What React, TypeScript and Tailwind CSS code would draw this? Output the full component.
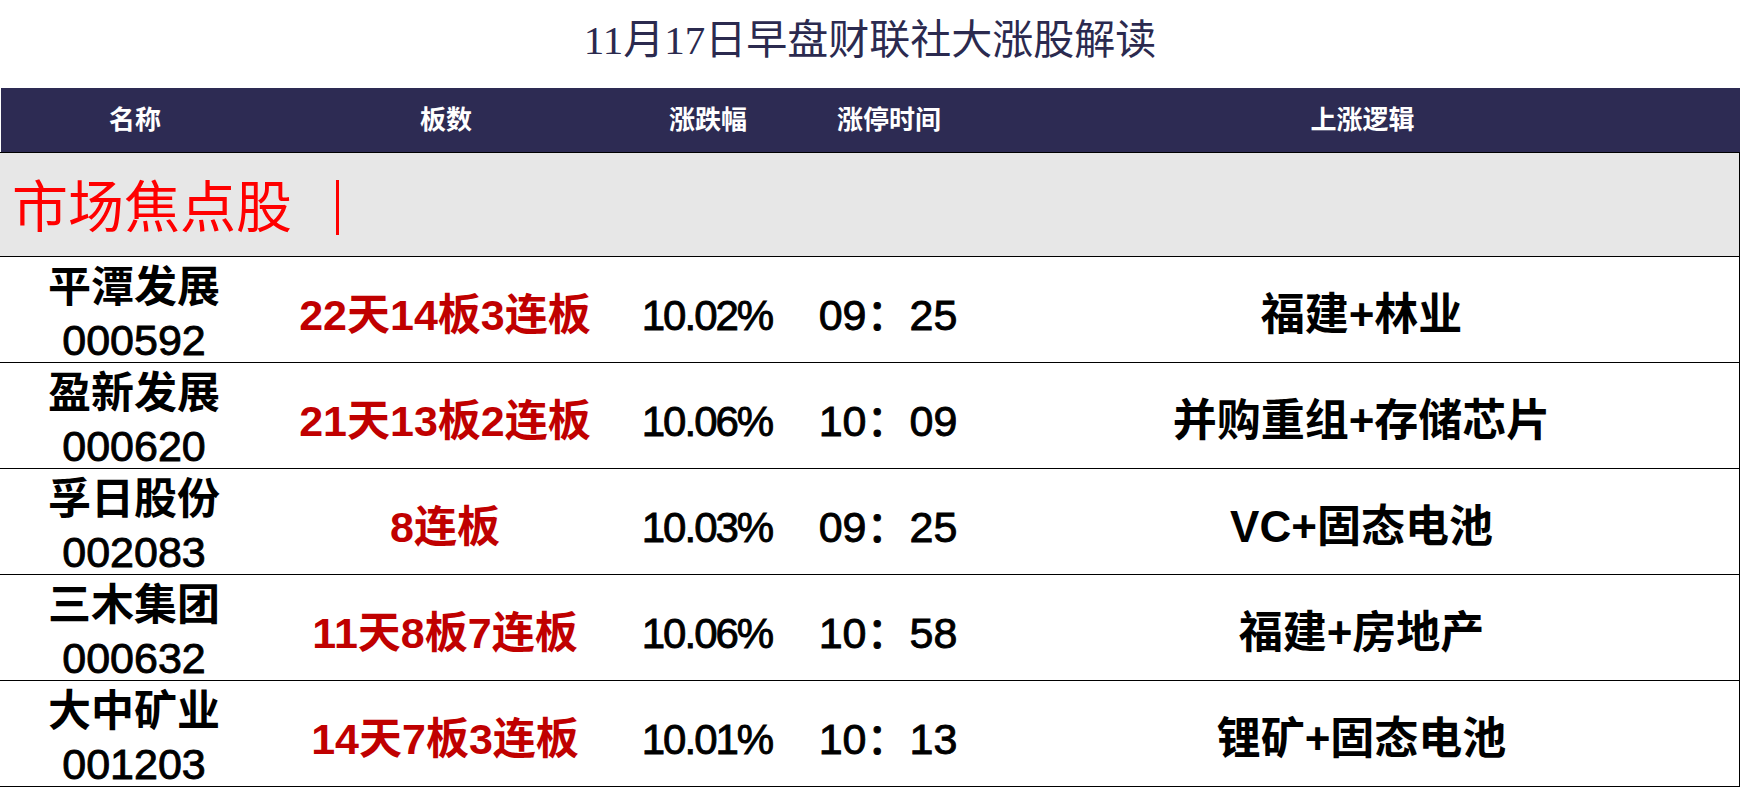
const sans = "font-['Liberation_Sans','Noto_Sans_CJK_SC',sans-serif]"

// medium weight: regular face with a thin stroke
const medium = '[-webkit-text-stroke:0.9px_black]'

const rows = [
  { name: '平潭发展', code: '000592', boards: '22天14板3连板', pct: '10.02%', time: '09：25', logic: '福建+林业' },
  { name: '盈新发展', code: '000620', boards: '21天13板2连板', pct: '10.06%', time: '10：09', logic: '并购重组+存储芯片' },
  { name: '孚日股份', code: '002083', boards: '8连板', pct: '10.03%', time: '09：25', logic: 'VC+固态电池' },
  { name: '三木集团', code: '000632', boards: '11天8板7连板', pct: '10.06%', time: '10：58', logic: '福建+房地产' },
  { name: '大中矿业', code: '001203', boards: '14天7板3连板', pct: '10.01%', time: '10：13', logic: '锂矿+固态电池' },
]

const cols = 'grid grid-cols-[268px_354px_170px_192px_1fr]'

export default function App() {
  return (
    <div className={`w-[1740px] h-[788px] bg-white overflow-hidden ${sans}`}>
      <div className="h-[88px] flex items-center justify-center">
        <h1 className="text-[41px] leading-none text-[#2b2a4f] font-['Liberation_Serif','Noto_Sans_CJK_SC',serif] pb-[8px]">
          11月17日早盘财联社大涨股解读
        </h1>
      </div>

      <div className={`${cols} h-[64px] ml-[1px] bg-[#2d2b53] text-white text-[26px] font-bold items-center text-center`}>
        <div>名称</div>
        <div>板数</div>
        <div>涨跌幅</div>
        <div>涨停时间</div>
        <div>上涨逻辑</div>
      </div>

      <div className="h-[105px] bg-[#e7e7e7] border-t border-r border-b border-t-black border-r-black border-b-black border-b-dotted flex items-center pl-[12px] pt-[6px]">
        <span className="text-[56px] leading-none text-[#ff0000] font-['Liberation_Serif','Noto_Sans_CJK_SC',serif]">
          市场焦点股
        </span>
        <div className="w-[3px] h-[55px] bg-[#ff0000] ml-[44px]" />
      </div>

      {rows.map((r, i) => (
        <div
          key={r.code}
          className={`${cols} h-[106px] border-r border-b border-black items-center text-center ${
            i === rows.length - 1 ? 'border-b-solid' : 'border-b-dotted'
          }`}
        >
          <div className="flex flex-col leading-[53px] pt-[4px]">
            <span className="text-[43px] font-bold text-black">{r.name}</span>
            <span className={`text-[43px] text-black ${medium}`}>{r.code}</span>
          </div>
          <div className="text-[43px] font-bold text-[#c00000] pt-[6px]">{r.boards}</div>
          <div className={`text-[42px] text-black tracking-[-2px] pt-[6px] ${medium}`}>{r.pct}</div>
          <div className={`text-[43px] text-black pt-[6px] ${medium}`}>{r.time}</div>
          <div className="text-[44px] font-bold text-black pt-[6px]">{r.logic}</div>
        </div>
      ))}
    </div>
  )
}
